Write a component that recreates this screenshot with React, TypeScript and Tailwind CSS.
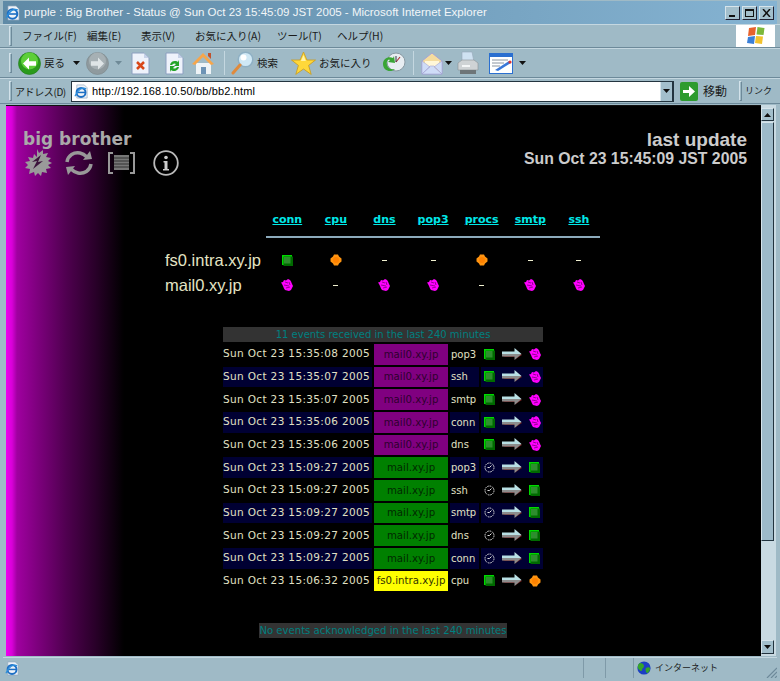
import React from "react";

const UI = { fontFamily: '"Liberation Sans", "Noto Sans CJK JP", sans-serif' };
const JP = { fontFamily: '"Noto Sans CJK JP", "Liberation Sans", sans-serif' };
const DV = { fontFamily: '"DejaVu Sans", sans-serif' };

const IeLogo = ({ size = 16 }: { size?: number }) => (
  <svg width={size} height={size} viewBox="0 0 16 16">
    <path d="M3 1h8l3 3v11H3z" fill="#eef3f8" stroke="#8fa6bd" strokeWidth=".7" />
    <circle cx="7.5" cy="9" r="4.8" fill="none" stroke="#1d6fc4" strokeWidth="2" />
    <path d="M3 9h9" stroke="#1d6fc4" strokeWidth="1.6" />
    <path d="M1 13C4 6 9 3 13 5" fill="none" stroke="#2a8fdc" strokeWidth="1.2" />
  </svg>
);

const NavCircle = ({ active, dir }: { active: boolean; dir: "l" | "r" }) => (
  <svg width="23" height="23" viewBox="0 0 23 23">
    <circle cx="11.5" cy="11.5" r="11" fill={active ? "#2a9a1c" : "#8f9a9e"} stroke={active ? "#1e7a18" : "#7c888c"} strokeWidth=".6" />
    <circle cx="11.5" cy="9" r="8.5" fill={active ? "#66d840" : "#aab4b7"} opacity=".85" />
    <path
      d={dir === "l" ? "M5 11.5l6-6v3.8h7v4.4h-7v3.8z" : "M18 11.5l-6-6v3.8H5v4.4h7v3.8z"}
      fill={active ? "#fff" : "#dfe5e7"}
    />
  </svg>
);

const Caret = ({ light }: { light?: boolean }) => (
  <svg width="7" height="4" viewBox="0 0 7 4">
    <path d="M0 0h7L3.5 4z" fill={light ? "#6f8a97" : "#111"} />
  </svg>
);

const Doc = ({ children }: { children: React.ReactNode }) => (
  <svg width="19" height="23" viewBox="0 0 19 23">
    <path d="M1 1h12l5 5v16H1z" fill="#eef2fb" stroke="#8c9fc0" />
    <path d="M13 1v5h5z" fill="#c6d2e8" />
    {children}
  </svg>
);

const Home = () => (
  <svg width="23" height="23" viewBox="0 0 23 23">
    <path d="M4 11v11h15V11z" fill="#eef3f6" />
    <path d="M9 15h5v7H9z" fill="#6d93b5" />
    <path d="M0 12L11 1l11 11-3 1-8-8-8 8z" fill="#f6a64b" />
    <path d="M16 1h3v6l-3-3z" fill="#c2522c" />
  </svg>
);

const Search = () => (
  <svg width="23" height="24" viewBox="0 0 23 24">
    <circle cx="14.5" cy="8.5" r="7.3" fill="#cfe8f5" stroke="#8fb0c4" strokeWidth="1.5" />
    <circle cx="12.5" cy="6.5" r="3" fill="#fff" />
    <path d="M9 14L2 22" stroke="#e08a3c" strokeWidth="3" strokeLinecap="round" />
  </svg>
);

const Star = () => (
  <svg width="25" height="25" viewBox="0 0 25 25">
    <path
      d="M12.5 1l3.4 8h8.6l-6.9 5.4 2.6 9L12.5 18l-7.7 5.4 2.6-9L.5 9h8.6z"
      fill="#ffd83a"
      stroke="#c99a1c"
      strokeWidth=".8"
    />
    <path d="M12.5 4l2.4 6h-5z" fill="#fff3a8" />
  </svg>
);

const History = () => (
  <svg width="24" height="24" viewBox="0 0 24 24">
    <circle cx="14" cy="11" r="9" fill="#e8eef2" stroke="#8a9aa3" />
    <path d="M14 11l4-5" stroke="#a33" strokeWidth="1.2" />
    <path d="M14 5v6" stroke="#334" strokeWidth="1" />
    <path d="M1 13C1 7 7 5 11 7l1-2 1 7-7-1 2-2C6 8 4 10 5 14c1 4 5 5 8 4-4 4-12 2-12-5z" fill="#3aa535" />
  </svg>
);

const Mail = () => (
  <svg width="22" height="23" viewBox="0 0 22 23">
    <path d="M1 9L11 1l10 8v13H1z" fill="#f5dc9e" stroke="#a5a4d4" />
    <path d="M4 9h14v5l-7 4-7-4z" fill="#fff7d8" />
    <path d="M1 22l8-8h4l8 8zM1 9l8 6-8 7zM21 9l-8 6 8 7z" fill="#cfdcf7" stroke="#a5a4d4" strokeWidth=".6" />
  </svg>
);

const Printer = () => (
  <svg width="24" height="24" viewBox="0 0 24 24">
    <path d="M6 1h10l2 10H6z" fill="#cfe2f2" stroke="#9ab" strokeWidth=".6" />
    <path d="M2 12l4-3h12l4 3v7H2z" fill="#cfd3d5" stroke="#8b9296" strokeWidth=".6" />
    <path d="M4 19h16v4H4z" fill="#6e7578" />
    <path d="M6 14h8v2H6z" fill="#f4f6f7" />
  </svg>
);

const Edit = () => (
  <svg width="24" height="21" viewBox="0 0 24 21">
    <rect x="0.5" y="0.5" width="23" height="20" fill="#fff" stroke="#2a6fd0" />
    <path d="M1 1h22v3H1z" fill="#2a6fd0" />
    <path d="M3 7h16M3 10h12M3 13h8" stroke="#8a94a0" />
    <path d="M6 17L20 8l2 2L9 18z" fill="#3a78d8" />
    <circle cx="21" cy="9" r="1.6" fill="#d33" />
  </svg>
);

const XpFlag = () => (
  <svg width="20" height="20" viewBox="0 0 20 20">
    <path d="M3 2l7-1-1 8-7 1z" fill="#e8622c" />
    <path d="M11.5 1l7 1-1 7-7-.5z" fill="#7cb83a" />
    <path d="M2 11l7-1-1 8-7-1z" fill="#3a7fd8" />
    <path d="M10 10l7 .5-1 7.5-7-1z" fill="#f2c22e" />
  </svg>
);

const Globe = () => (
  <svg width="14" height="14" viewBox="0 0 14 14">
    <circle cx="7" cy="7" r="6.6" fill="#1c3fc4" />
    <path d="M3 2c2 0 4 1 4 3S5 7 5 9 3 10 1.5 8 1 3 3 2zM9 7c2-1 4-1 4 1s-2 4-3 4-2-4-1-5z" fill="#35a52a" />
  </svg>
);

const Grip = () => (
  <div className="w-[3px] h-[20px] border-l border-t border-[#d3e2ea] border-r-[1px] border-r-[#6d8a9a] border-b border-b-[#6d8a9a]" />
);

const Green = () => (
  <svg width="11" height="11" viewBox="0 0 11 11" className="shrink-0">
    <rect width="10" height="10" fill="#00d800" />
    <rect x="1.500" y="1.500" width="9.500" height="9.500" fill="#006a00" />
    <rect x="2" y="2" width="6.500" height="6.500" fill="#2e8e2e" />
  </svg>
);

const Purple = () => (
  <svg width="12" height="12" viewBox="0 0 12 12" className="shrink-0">
    <path
      d="M3 1l2 .5L7 0l2 1 1 1.500L11 5l1 2-1 2-1 2-2 1-2-.5L4 11 3 9.500 2 7 1 5 0 3.500 2 3z"
      fill="#ff00ff"
    />
    <path d="M4 3l3 1M3 6l5 1M5 9l4-1M8 3l1 3" stroke="#7a007a" strokeWidth=".8" />
  </svg>
);

const Orange = () => (
  <svg width="12" height="12" viewBox="0 0 12 12" className="shrink-0">
    <path d="M4 .5h4l1 2 2.500 2v3L9 9.500l-1 2H4l-1-2-2.500-2v-3L3 2.500z" fill="#ff9410" />
    <circle cx="6" cy="6" r="3" fill="#ff8200" />
  </svg>
);

const Clock = () => (
  <svg width="11" height="11" viewBox="0 0 11 11" className="shrink-0">
    <circle cx="5.500" cy="5.500" r="4.500" fill="none" stroke="#ddd" strokeDasharray="1.500 .8" />
    <path d="M5.500 5.500l2-2M5.500 5.500H3.500" stroke="#ddd" />
  </svg>
);

const Arrow = () => (
  <svg width="20" height="13" viewBox="0 0 20 13" className="shrink-0">
    <path d="M0 9h13v2.500L20 7l-6-5.500V4" fill="#6a1c1c" />
    <path d="M0 3.500h12.500V0L19.500 6H0z" fill="#b8dfe4" />
    <path d="M0 6h19.500l-7 6V8.500H0z" fill="#8c8c8c" />
  </svg>
);

const HdrTools = () => (
  <div className="flex items-center mt-[-2px]">
    <svg width="29" height="27" viewBox="0 0 29 27">
      <path
        d="M14 0l2 4 4-3 0 4 5-1-2 4 5 1-3 3 4 2-4 2 3 3-5 1 1 4-5-1-1 4-3-3-3 3-1-4-5 2 1-5-5-1 3-3-3-3 5-1-2-4 5 1 1-4 3 3z"
        fill="#9a9a9a"
      />
      <path d="M10 20l4-8-5 1 9-7-3 7 5-1z" fill="#3c143c" />
    </svg>
    <svg className="ml-[13px]" width="28" height="26" viewBox="0 0 28 26" fill="none">
      <path d="M2 12C3 5 9 2 15 3c3 .5 5 2 7 4" stroke="#999" strokeWidth="3.500" />
      <path d="M18 10l9-1-2-8z" fill="#999" />
      <path d="M26 14c-1 7-7 10-13 9-3-.5-5-2-7-4" stroke="#999" strokeWidth="3.500" />
      <path d="M10 16l-9 1 2 8z" fill="#999" />
    </svg>
    <svg className="ml-[15px]" width="27" height="24" viewBox="0 0 27 24" fill="none">
      <path d="M5 2H1v20h4M22 2h4v20h-4" stroke="#999" strokeWidth="2" />
      <rect x="6" y="4" width="15" height="15" fill="#777" />
      <path d="M6 7h15M6 10h15M6 13h15M6 16h15" stroke="#333" />
    </svg>
    <svg className="ml-[18px]" width="26" height="26" viewBox="0 0 26 26" fill="none">
      <circle cx="13" cy="13" r="11.800" stroke="#bbb" strokeWidth="1.800" />
      <circle cx="13" cy="7.500" r="1.800" fill="#ccc" />
      <path d="M10.500 11h4v8h1.500v1.500h-6V19h1.500v-6.500h-1z" fill="#ccc" />
    </svg>
  </div>
);

const HEADERS = ["conn", "cpu", "dns", "pop3", "procs", "smtp", "ssh"];
const Dash = () => <span className="block w-[5px] h-[1px] bg-[#f0f0d0]" />;

const statusRows: { host: string; cells: React.ReactNode[] }[] = [
  {
    host: "fs0.intra.xy.jp",
    cells: [<Green />, <Orange />, <Dash />, <Dash />, <Orange />, <Dash />, <Dash />],
  },
  {
    host: "mail0.xy.jp",
    cells: [<Purple />, <Dash />, <Purple />, <Purple />, <Dash />, <Purple />, <Purple />],
  },
];

type Ev = { time: string; host: string; svc: string; from: React.ReactNode; to: React.ReactNode; kind: "p" | "g" | "y" };
const ev = (time: string, svc: string, kind: "p" | "g" | "y"): Ev => ({
  time,
  svc,
  kind,
  host: kind === "p" ? "mail0.xy.jp" : kind === "g" ? "mail.xy.jp" : "fs0.intra.xy.jp",
  from: kind === "g" ? <Clock /> : <Green />,
  to: kind === "p" ? <Purple /> : kind === "g" ? <Green /> : <Orange />,
});

const events: Ev[] = [
  ev("Sun Oct 23 15:35:08 2005", "pop3", "p"),
  ev("Sun Oct 23 15:35:07 2005", "ssh", "p"),
  ev("Sun Oct 23 15:35:07 2005", "smtp", "p"),
  ev("Sun Oct 23 15:35:06 2005", "conn", "p"),
  ev("Sun Oct 23 15:35:06 2005", "dns", "p"),
  ev("Sun Oct 23 15:09:27 2005", "pop3", "g"),
  ev("Sun Oct 23 15:09:27 2005", "ssh", "g"),
  ev("Sun Oct 23 15:09:27 2005", "smtp", "g"),
  ev("Sun Oct 23 15:09:27 2005", "dns", "g"),
  ev("Sun Oct 23 15:09:27 2005", "conn", "g"),
  ev("Sun Oct 23 15:06:32 2005", "cpu", "y"),
];

const WinBtn = ({ children }: { children: React.ReactNode }) => (
  <div className="w-[15px] h-[14px] bg-[#a3bfcc] border border-t-[#d6e4eb] border-l-[#d6e4eb] border-r-[#223] border-b-[#223] flex items-center justify-center">
    {children}
  </div>
);

export default function App() {
  return (
    <div className="w-[780px] h-[681px] bg-[#9fbac6] flex flex-col overflow-hidden" style={UI}>
      {/* title bar */}
      <div className="h-[23px] mx-[3px] mt-[1px] shrink-0 flex items-center bg-gradient-to-r from-[#5f8aa6] to-[#85b3d2] pl-[2px] pr-[3px]">
        <IeLogo size={16} />
        <span className="ml-[3px] text-[11.500px] text-[#f2f6f8] whitespace-nowrap" style={UI}>
          purple : Big Brother - Status @ Sun Oct 23 15:45:09 JST 2005 - Microsoft Internet Explorer
        </span>
        <div className="ml-auto flex gap-[2px]">
          <WinBtn>
            <span className="block w-[6px] h-[2px] bg-[#111] mt-[6px] mr-[2px]" />
          </WinBtn>
          <WinBtn>
            <span className="block w-[9px] h-[8px] border border-t-2 border-[#111]" />
          </WinBtn>
          <WinBtn>
            <svg width="9" height="8" viewBox="0 0 9 8">
              <path d="M1 0l7 8M8 0L1 8" stroke="#111" strokeWidth="1.500" />
            </svg>
          </WinBtn>
        </div>
      </div>

      {/* menu bar */}
      <div className="h-[24px] shrink-0 flex items-center border-t border-[#c4d7e0] border-b border-b-[#6d8a9a] pl-[9px]">
        <Grip />
        <div className="flex items-center ml-[10px] text-[10.500px] text-[#1a1a1a] whitespace-nowrap" style={JP}>
          <span className="w-[65px]">ファイル(F)</span>
          <span className="w-[54px]">編集(E)</span>
          <span className="w-[54px]">表示(V)</span>
          <span className="w-[82px]">お気に入り(A)</span>
          <span className="w-[60px]">ツール(T)</span>
          <span>ヘルプ(H)</span>
        </div>
        <div className="ml-auto h-full w-[39px] mr-[5px] bg-white flex items-center justify-center">
          <XpFlag />
        </div>
      </div>

      {/* toolbar */}
      <div className="h-[30px] shrink-0 flex items-center border-t border-[#c4d7e0] border-b border-b-[#6d8a9a] pl-[9px] text-[10.500px] text-[#1a1a1a]" style={JP}>
        <Grip />
        <div className="ml-[6px]">
          <NavCircle active dir="l" />
        </div>
        <span className="ml-[3px] w-[22px] whitespace-nowrap">戻る</span>
        <div className="ml-[7px]">
          <Caret />
        </div>
        <div className="ml-[6px]">
          <NavCircle active={false} dir="r" />
        </div>
        <div className="ml-[6px]">
          <Caret light />
        </div>
        <div className="ml-[9px]">
          <Doc>
            <path d="M6 10l7 7M13 10l-7 7" stroke="#d9471a" strokeWidth="2.500" />
          </Doc>
        </div>
        <div className="ml-[15px]">
          <Doc>
            <path d="M5 13a5 5 0 0 1 8-3l1-2v6h-5l2-2a3 3 0 0 0-4 1z" fill="#25a52a" />
            <path d="M14 15a5 5 0 0 1-8 3l-1 2v-6h5l-2 2a3 3 0 0 0 4-1z" fill="#25a52a" />
          </Doc>
        </div>
        <div className="ml-[8px]">
          <Home />
        </div>
        <div className="ml-[9px] w-[1px] h-[24px] bg-[#6d8a9a] border-r border-[#c4d7e0]" />
        <div className="ml-[6px]">
          <Search />
        </div>
        <span className="ml-[3px] w-[24px] whitespace-nowrap">検索</span>
        <div className="ml-[10px]">
          <Star />
        </div>
        <span className="ml-[3px] w-[50px] whitespace-nowrap">お気に入り</span>
        <div className="ml-[13px]">
          <History />
        </div>
        <div className="ml-[7px] w-[1px] h-[24px] bg-[#6d8a9a] border-r border-[#c4d7e0]" />
        <div className="ml-[7px]">
          <Mail />
        </div>
        <div className="ml-[2px]">
          <Caret />
        </div>
        <div className="ml-[4px]">
          <Printer />
        </div>
        <div className="ml-[9px]">
          <Edit />
        </div>
        <div className="ml-[6px]">
          <Caret />
        </div>
      </div>

      {/* address bar */}
      <div className="h-[26px] shrink-0 flex items-center border-t border-[#c4d7e0] border-b border-b-[#6d8a9a] pl-[9px] text-[10px] text-[#1a1a1a]" style={JP}>
        <Grip />
        <span className="ml-[3px] w-[50px] whitespace-nowrap tracking-[-0.4px]">アドレス(D)</span>
        <div className="ml-[6px] w-[603px] h-[21px] bg-white border border-[#23343f] flex items-center pl-[2px]">
          <IeLogo size={15} />
          <span className="ml-[3px] text-[11px] text-black tracking-[0.15px]" style={UI}>
            http://192.168.10.50/bb/bb2.html
          </span>
          <div className="ml-auto w-[13px] h-full bg-[#a3bfcc] border-l border-[#d6e4eb] border-r border-r-[#23343f] flex items-center justify-center">
            <svg width="7" height="4" viewBox="0 0 7 4">
              <path d="M0 0h7L3.500 4z" fill="#111" />
            </svg>
          </div>
        </div>
        <svg className="ml-[6px]" width="18" height="19" viewBox="0 0 18 19">
          <rect width="18" height="19" rx="2" fill="#2d9b2f" />
          <path d="M3 8h6V4l6 5.500L9 15v-4H3z" fill="#fff" />
        </svg>
        <span className="ml-[5px] w-[30px] whitespace-nowrap text-[12px]">移動</span>
        <div className="ml-[6px]">
          <Grip />
        </div>
        <span className="ml-[3px] whitespace-nowrap text-[9px]">リンク</span>
      </div>

      {/* page + scrollbar */}
      <div className="flex-1 min-h-0 flex mt-[1px] ml-[6px] mr-[4px]">
        <div className="flex-1 min-w-0 flex flex-col pr-[1px] bg-[linear-gradient(to_right,#f000f0_0,#d800d8_6px,#a000a0_11px,#800080_30px,#500050_60px,#280028_90px,#000000_118px)] border-t border-[#111]">
          <div className="flex justify-between pl-[17px] pr-[13px] pt-[21px]">
            <div className="flex flex-col">
              <span className="text-[17px] leading-[24px] font-bold text-[#aaa]" style={DV}>
                big brother
              </span>
              <HdrTools />
            </div>
            <div className="flex flex-col items-end">
              <span className="text-[19px] leading-[24px] font-bold text-[#ccc] mt-[1px]" style={UI}>
                last update
              </span>
              <span className="text-[15.800px] leading-[18px] font-bold text-[#ccc] mt-[-2px]" style={UI}>
                Sun Oct 23 15:45:09 JST 2005
              </span>
            </div>
          </div>

          {/* status matrix */}
          <div className="w-[436px] mx-auto mt-[34px]">
            <div className="grid grid-cols-[98px_repeat(7,48.600px)] h-[20px] items-center">
              <span />
              {HEADERS.map((h) => (
                <a key={h} className="text-center text-[11px] font-bold text-[#00e8e8] underline" style={DV}>
                  {h}
                </a>
              ))}
            </div>
            <div className="h-[2px] ml-[101px] mr-[1px] mt-[6px] bg-[#8caabb]" />
            <div className="mt-[12px] flex flex-col gap-[5px]">
              {statusRows.map((r) => (
                <div key={r.host} className="grid grid-cols-[98px_repeat(7,48.600px)] h-[20px] items-center">
                  <span className="text-[16.500px] leading-[20px] text-[#e4e4c4] whitespace-nowrap" style={UI}>
                    {r.host}
                  </span>
                  {r.cells.map((c, i) => (
                    <div key={i} className="flex items-center justify-center">
                      {c}
                    </div>
                  ))}
                </div>
              ))}
            </div>
          </div>

          {/* events */}
          <div className="w-[320px] mx-auto mt-[32px] flex flex-col">
            <div className="h-[15px] bg-[#333] text-center text-[10px] leading-[15px] text-[#008080]" style={DV}>
              11 events received in the last 240 minutes
            </div>
            <div className="mt-[2px] flex flex-col gap-[2px]">
              {events.map((e, i) => {
                const alt = i % 2 === 1 ? "bg-[#000033]" : "";
                const hostCls =
                  e.kind === "p"
                    ? "bg-[#800080] text-[#2e002e]"
                    : e.kind === "g"
                      ? "bg-[#008000] text-[#002a00]"
                      : "bg-[#ffff00] text-[#333300]";
                return (
                  <div key={i} className="grid grid-cols-[149px_74px_29px_62px] gap-x-[2px] h-[20.670px] text-[10.500px] text-[#e0e0c4]" style={DV}>
                    <div className={`flex items-center whitespace-nowrap tracking-[0.35px] ${alt}`}>{e.time}</div>
                    <div className={`flex items-center justify-center whitespace-nowrap text-[10.200px] ${hostCls}`}>{e.host}</div>
                    <div className={`flex items-center pl-[1px] text-[10px] ${alt}`}>{e.svc}</div>
                    <div className={`flex items-center pl-[3px] ${alt}`}>
                      <div className="w-[12px] flex justify-start">{e.from}</div>
                      <div className="ml-[6px]">
                        <Arrow />
                      </div>
                      <div className="ml-[7px]">{e.to}</div>
                    </div>
                  </div>
                );
              })}
            </div>
          </div>

          <div className="mt-[32px] mx-auto h-[15px] w-[248px] bg-[#333] text-center text-[10.100px] leading-[15px] text-[#008080] whitespace-nowrap" style={DV}>
            No events acknowledged in the last 240 minutes
          </div>
        </div>

        {/* scrollbar */}
        <div className="w-[15px] shrink-0 flex flex-col bg-[#c9dae2] pt-[3px] pb-[2px]">
          <div className="h-[13px] w-[13px] bg-[#a3bfcc] border border-[#d6e4eb] border-r-[#23343f] border-b-[#23343f] flex items-center justify-center">
            <svg width="7" height="4" viewBox="0 0 7 4">
              <path d="M0 4h7L3.500 0z" fill="#111" />
            </svg>
          </div>
          <div className="mt-[1px] h-[419px] w-[13px] bg-[#9dbac9] border border-[#d6e4eb] border-r-[#23343f] border-b-[#23343f]" />
          <div className="mt-auto h-[14px] w-[13px] bg-[#a3bfcc] border border-[#d6e4eb] border-r-[#23343f] border-b-[#23343f] flex items-center justify-center">
            <svg width="7" height="4" viewBox="0 0 7 4">
              <path d="M0 0h7L3.500 4z" fill="#111" />
            </svg>
          </div>
        </div>
      </div>

      {/* status bar */}
      <div className="h-[21px] mb-[3px] mx-[3px] shrink-0 flex items-center border-t border-[#c4d7e0] mt-[1px] text-[9px] text-[#1a1a1a]" style={JP}>
        <div className="ml-[2px]">
          <IeLogo size={15} />
        </div>
        <div className="ml-auto flex items-center h-full">
          <div className="w-[22px] h-full border-l border-[#7f9aa8]" />
          <div className="w-[28px] h-full border-l border-[#7f9aa8]" />
          <div className="w-[144px] h-full border-l border-[#7f9aa8] flex items-center pl-[3px]">
            <Globe />
            <span className="ml-[4px] whitespace-nowrap">インターネット</span>
            <svg className="ml-auto mt-[8px]" width="11" height="11" viewBox="0 0 11 11">
              <path d="M11 1L1 11M11 5l-6 6M11 9l-2 2" stroke="#6d8a9a" strokeWidth="1.200" />
            </svg>
          </div>
        </div>
      </div>
    </div>
  );
}
